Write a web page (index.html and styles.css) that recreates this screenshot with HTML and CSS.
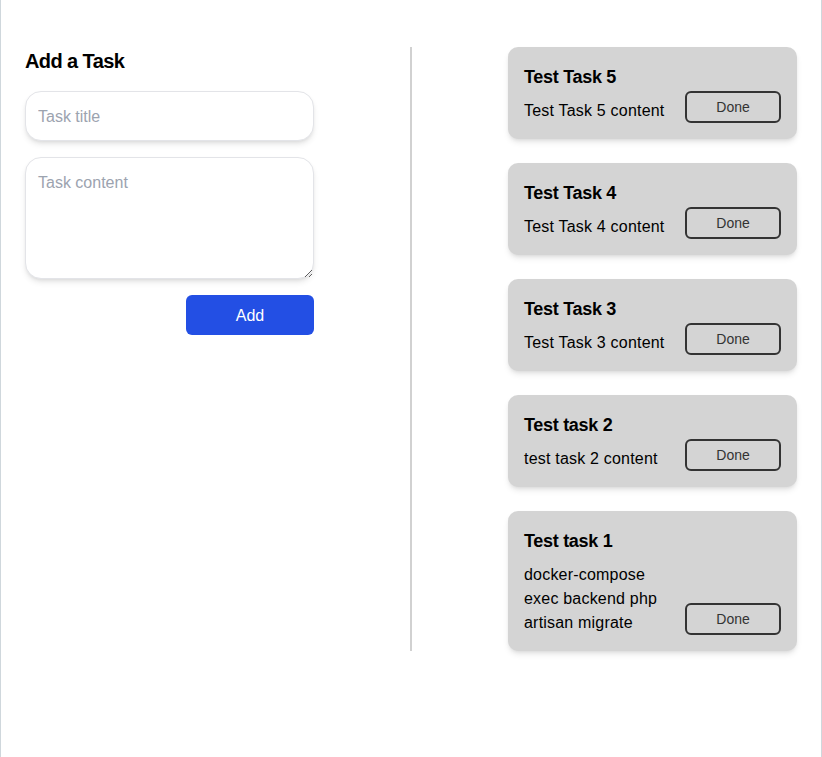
FILE: index.html
```html
<!DOCTYPE html>
<html lang="en">
<head>
<meta charset="utf-8">
<title>Tasks</title>
<link rel="stylesheet" href="styles.css">
</head>
<body>
<main class="page">
  <section class="form-col">
    <h2 class="form-title">Add a Task</h2>
    <input class="field" type="text" placeholder="Task title">
    <textarea class="field area" rows="4" placeholder="Task content"></textarea>
    <div class="actions">
      <button class="btn-add" type="button">Add</button>
    </div>
  </section>
  <div class="divider"></div>
  <section class="list-col">
    <article class="card">
      <div class="card-body">
        <h3 class="card-title">Test Task 5</h3>
        <p class="card-text">Test Task 5 content</p>
      </div>
      <button class="btn-done" type="button">Done</button>
    </article>
    <article class="card">
      <div class="card-body">
        <h3 class="card-title">Test Task 4</h3>
        <p class="card-text">Test Task 4 content</p>
      </div>
      <button class="btn-done" type="button">Done</button>
    </article>
    <article class="card">
      <div class="card-body">
        <h3 class="card-title">Test Task 3</h3>
        <p class="card-text">Test Task 3 content</p>
      </div>
      <button class="btn-done" type="button">Done</button>
    </article>
    <article class="card">
      <div class="card-body">
        <h3 class="card-title">Test task 2</h3>
        <p class="card-text">test task 2 content</p>
      </div>
      <button class="btn-done" type="button">Done</button>
    </article>
    <article class="card">
      <div class="card-body">
        <h3 class="card-title">Test task 1</h3>
        <p class="card-text">docker-compose exec backend php artisan migrate</p>
      </div>
      <button class="btn-done" type="button">Done</button>
    </article>
  </section>
</main>
</body>
</html>
```

FILE: styles.css
```css
* {
  box-sizing: border-box;
}

html, body {
  margin: 0;
  padding: 0;
  background: #ffffff;
}

body {
  font-family: "Liberation Sans", Arial, sans-serif;
  color: #000;
  font-size: 16px;
  line-height: 24px;
}

.page {
  height: 757px;
  border-left: 1px solid #cfd7dc;
  border-right: 1px solid #cfd7dc;
  display: flex;
  align-items: flex-start;
  padding: 47px 24px 0;
}

.form-col {
  width: 289px;
  display: flex;
  flex-direction: column;
}

.form-title {
  margin: 0 0 16px;
  font-size: 20px;
  line-height: 28px;
  font-weight: 700;
  letter-spacing: -0.6px;
}

.field {
  display: block;
  width: 100%;
  font-family: inherit;
  font-size: 16px;
  line-height: 24px;
  padding: 13px 12px 11px;
  border: 1px solid #e3e4e8;
  border-radius: 16px;
  background: #fff;
  box-shadow: 0 4px 6px -1px rgba(0, 0, 0, 0.1), 0 2px 4px -2px rgba(0, 0, 0, 0.1);
  outline: none;
  color: #111;
}

.field::placeholder {
  color: #9ca3af;
}

.area {
  margin-top: 16px;
  height: 122px;
  resize: vertical;
}

.actions {
  display: flex;
  justify-content: flex-end;
  margin-top: 16px;
}

.btn-add {
  width: 128px;
  height: 40px;
  border: none;
  border-radius: 6px;
  background: #234fe4;
  color: #fff;
  font-family: inherit;
  font-size: 16px;
  padding: 1px 0 0;
  cursor: pointer;
}

.divider {
  width: 2px;
  height: 604px;
  background: #d1d1d1;
  margin: 0 96px;
  flex-shrink: 0;
}

.list-col {
  width: 289px;
  display: flex;
  flex-direction: column;
  gap: 24px;
}

.card {
  background: #d4d4d4;
  border-radius: 10px;
  padding: 16px;
  display: flex;
  justify-content: space-between;
  align-items: flex-end;
  gap: 16px;
  box-shadow: 0 4px 6px -1px rgba(0, 0, 0, 0.1), 0 2px 4px -2px rgba(0, 0, 0, 0.1);
}

.card-title {
  margin: 0;
  font-size: 18px;
  line-height: 28px;
  font-weight: 700;
  letter-spacing: -0.3px;
}

.card-text {
  margin: 8px 0 0;
  font-size: 16px;
  line-height: 24px;
  letter-spacing: 0.2px;
}

.btn-done {
  flex-shrink: 0;
  width: 96px;
  height: 32px;
  border: 2px solid #333;
  border-radius: 6px;
  background: transparent;
  color: #333;
  font-family: inherit;
  font-size: 14px;
  padding: 0;
  line-height: 20px;
  cursor: pointer;
}
```
